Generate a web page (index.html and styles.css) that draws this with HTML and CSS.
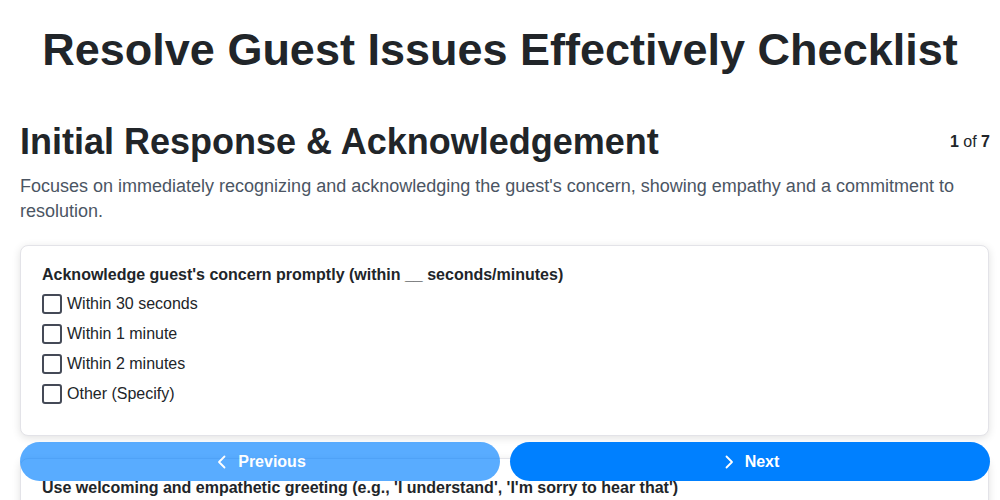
FILE: index.html
```html
<!DOCTYPE html>
<html lang="en">
<head>
<meta charset="utf-8">
<title>Resolve Guest Issues Effectively Checklist</title>
<link rel="stylesheet" href="styles.css">
</head>
<body>
<div class="page">
  <h1 class="title">Resolve Guest Issues Effectively Checklist</h1>
  <div class="section-head">
    <h2 class="section-title">Initial Response &amp; Acknowledgement</h2>
    <div class="step"><b>1</b> of <b>7</b></div>
  </div>
  <p class="section-desc">Focuses on immediately recognizing and acknowledging the guest's concern, showing empathy and a commitment to resolution.</p>

  <div class="card">
    <div class="question">Acknowledge guest's concern promptly (within __ seconds/minutes)</div>
    <label class="option"><span class="box"></span>Within 30 seconds</label>
    <label class="option"><span class="box"></span>Within 1 minute</label>
    <label class="option"><span class="box"></span>Within 2 minutes</label>
    <label class="option"><span class="box"></span>Other (Specify)</label>
  </div>

  <div class="card">
    <div class="question">Use welcoming and empathetic greeting (e.g., 'I understand', 'I'm sorry to hear that')</div>
    <label class="option"><span class="box"></span>Yes</label>
    <label class="option"><span class="box"></span>No</label>
  </div>
</div>

<div class="nav">
  <button class="btn btn-prev" disabled>
    <svg class="chev" viewBox="0 0 16 16" width="16" height="16"><path d="M10.5 2.5 5 8l5.5 5.5" fill="none" stroke="currentColor" stroke-width="1.8" stroke-linecap="round" stroke-linejoin="round"/></svg>
    Previous
  </button>
  <button class="btn btn-next">
    <svg class="chev" viewBox="0 0 16 16" width="16" height="16"><path d="M5.5 2.5 11 8l-5.5 5.5" fill="none" stroke="currentColor" stroke-width="1.8" stroke-linecap="round" stroke-linejoin="round"/></svg>
    Next
  </button>
</div>
</body>
</html>
```
FILE: styles.css
```css
* { box-sizing: border-box; }
html, body { margin: 0; padding: 0; background: #fff; }
body {
  font-family: "Liberation Sans", Arial, sans-serif;
  color: #212529;
}
.page {
  padding: 0 11px 120px 20px;
}
.title {
  margin: 0 -11px 0 -20px;
  padding-top: 24px;
  font-size: 45px;
  font-weight: 700;
  line-height: 52px;
  text-align: center;
  white-space: nowrap;
  color: #212529;
}
.section-head {
  display: flex;
  justify-content: space-between;
  align-items: center;
  margin-top: 44px;
  margin-right: -1px;
}
.section-title {
  margin: 0;
  font-size: 36px;
  font-weight: 700;
  line-height: 44px;
  color: #212529;
}
.step {
  font-size: 16px;
  color: #212529;
}
.section-desc {
  margin: 10px 0 21px;
  font-size: 18px;
  line-height: 25px;
  color: #4b5563;
}
.card {
  background: #fff;
  border: 1px solid #e3e3e8;
  border-radius: 8px;
  box-shadow: 0 2px 8px rgba(0,0,0,0.12);
  padding: 19px 21px 26px;
  margin-bottom: 22px;
  display: flex;
  flex-direction: column;
}
.question {
  font-weight: 700;
  font-size: 16px;
  line-height: 20px;
  margin-bottom: 4px;
  color: #212529;
}
.option {
  display: flex;
  align-items: center;
  font-size: 16px;
  line-height: 20px;
  height: 30px;
  color: #212529;
}
.box {
  width: 20px;
  height: 20px;
  border: 2px solid #454a57;
  border-radius: 3px;
  margin-right: 5px;
  flex: none;
}
.nav {
  position: fixed;
  left: 0;
  right: 0;
  bottom: 19px;
  display: flex;
  gap: 10px;
  padding: 0 10px 0 20px;
}
.btn {
  flex: 1;
  height: 39px;
  border: none;
  border-radius: 20px;
  color: #fff;
  font-family: "Liberation Sans", Arial, sans-serif;
  font-size: 16px;
  font-weight: 700;
  display: flex;
  align-items: center;
  justify-content: center;
  gap: 8px;
  cursor: pointer;
}
.btn-next { background: #0080ff; }
.btn-prev { background: #0080ff; opacity: 0.65; }
.chev { flex: none; }
```
